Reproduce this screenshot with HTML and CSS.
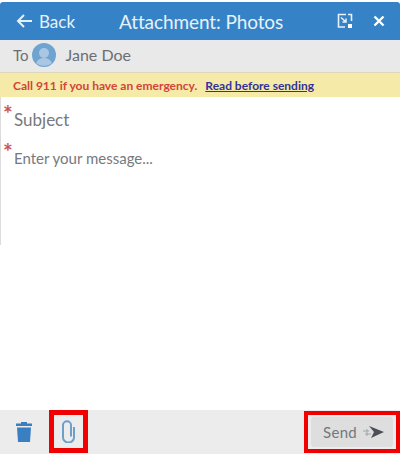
FILE: index.html
```html
<!DOCTYPE html>
<html lang="en">
<head>
    <meta charset="UTF-8">
    <title>Attachment: Photos</title>
    <link rel="stylesheet" href="styles.css">
</head>
<body>
    <div class="panel">
        <header class="title-bar">
            <a class="back">
                <svg width="17" height="16" viewBox="0 0 17 16"><path d="M8 2 2 8l6 6M2 8h14" fill="none" stroke="#e4f0fa" stroke-width="2"/></svg>
                Back
            </a>
            <h1>Attachment: Photos</h1>
            <div class="title-icons">
                <svg width="16" height="16" viewBox="0 0 16 16"><path d="M9 1.500H1.500V14H8M11 1.500h3.500V8" fill="none" stroke="#e8f1f9" stroke-width="1.600"/><path d="M4 4.500 9 9M9 5.500V9H5.500" fill="none" stroke="#e8f1f9" stroke-width="1.500"/><rect x="11" y="11" width="4" height="4" fill="#fff"/></svg>
                <svg width="12" height="12" viewBox="0 0 12 12"><path d="M1.500 1.500l9 9M10.500 1.500l-9 9" stroke="#fff" stroke-width="2.400"/></svg>
            </div>
        </header>
        <div class="to-row">
            <span class="to-label">To</span>
            <svg class="avatar" width="24" height="24" viewBox="0 0 24 24"><circle cx="12" cy="12" r="12" fill="#6fa3d0"/><circle cx="12" cy="10" r="5" fill="#a9c7e2"/><path d="M4 20c2-4 5-5 8-5s6 1 8 5a12 12 0 0 1-16 0z" fill="#a9c7e2"/></svg>
            <span class="to-name">Jane Doe</span>
        </div>
        <div class="notice">
            <span class="notice-text">Call 911 if you have an emergency.</span>
            <a class="notice-link">Read before sending</a>
        </div>
        <form class="message-form">
            <div class="field field-subject"><span class="req">*</span>Subject</div>
            <div class="field field-body"><span class="req">*</span>Enter your message...</div>
        </form>
        <footer class="actions">
            <div class="action-left">
                <svg class="trash" width="18" height="22" viewBox="0 0 18 22"><path d="M6 2.500V1h6v1.500h5V5H1V2.500z" fill="#3a7fc1"/><path d="M2 6.500h14L15 21H3z" fill="#3a7fc1"/></svg>
                <div class="marked clip-box">
                    <svg width="15" height="23" viewBox="0 0 15 23"><path d="M13 7v10.500a5.500 5 0 0 1-11 0V5a4 3.700 0 0 1 8 0v11.500" fill="none" stroke="#6d9fcb" stroke-width="2"/></svg>
                </div>
            </div>
            <div class="marked send-box">
                <button class="send" type="button">
                    Send
                    <svg width="21" height="14" viewBox="0 0 21 14"><path d="M6 1l15 6-13 6 3-6z" fill="#4b4f57"/><path d="M0 6h6M2 9h6M4 4v7" stroke="#a3a6aa" stroke-width="1"/></svg>
                </button>
            </div>
        </footer>
    </div>
</body>
</html>
```

FILE: styles.css
```css
* {
    box-sizing: border-box;
}
body {
    margin: 0;
    font-family: Lato, "Open Sans", sans-serif;
    background-color: white;
}
.panel {
    display: flex;
    flex-direction: column;
    height: 454px;
    padding-top: 2px;
}
.title-bar {
    display: flex;
    align-items: center;
    height: 38px;
    padding: 0 15px 0 16px;
    background-color: #3682c6;
    color: #e6f1fa;
    border-radius: 3px 3px 0 0;
}
.back {
    display: flex;
    align-items: center;
    gap: 6px;
    width: 103px;
    font-size: 17px;
}
.title-bar h1 {
    flex: 1;
    margin: 0;
    font-size: 19px;
    font-weight: 400;
    letter-spacing: -0.1px;
}
.title-icons {
    display: flex;
    align-items: center;
    gap: 20px;
}
.to-row {
    display: flex;
    align-items: center;
    height: 32px;
    padding: 0 0 3px 13px;
    background-color: #e9e9e9;
    color: #6b6f74;
}
.to-label {
    font-size: 15px;
    margin-right: 3px;
}
.to-name {
    margin-left: 10px;
    font-size: 16px;
}
.notice {
    display: flex;
    align-items: center;
    height: 25px;
    padding-left: 13px;
    background-color: #f5eaa8;
    border-top: 1px solid #ddd9b8;
    font-size: 12px;
    font-weight: 700;
}
.notice-text {
    color: #d2443c;
    margin-right: 8px;
}
.notice-link {
    color: #33329a;
    text-decoration: underline;
}
.message-form {
    height: 148px;
    border-left: 1px solid #dcdcdc;
    color: #77797d;
}
.field {
    display: flex;
    padding-left: 2px;
}
.req {
    width: 11px;
    margin-top: -6px;
    color: #c9545a;
    font-size: 23px;
    line-height: 22px;
    font-weight: 700;
}
.field-subject {
    padding-top: 11px;
    font-size: 17px;
    line-height: 24px;
}
.field-body {
    padding-top: 14px;
    font-size: 15px;
    line-height: 24px;
}
.actions {
    display: flex;
    align-items: flex-start;
    justify-content: space-between;
    height: 44px;
    margin-top: auto;
    background-color: #ececec;
}
.action-left {
    display: flex;
    align-items: center;
    height: 43px;
    padding-left: 15px;
}
.trash {
    margin-right: 16px;
}
.marked {
    display: flex;
    align-items: center;
    justify-content: center;
    border: 4px solid #f00000;
}
.clip-box {
    width: 39px;
    height: 43px;
    border-width: 5px;
}
.send-box {
    width: 96px;
    height: 42px;
    margin-top: 1px;
}
.send {
    display: flex;
    align-items: center;
    justify-content: flex-end;
    gap: 6px;
    width: 82px;
    height: 30px;
    padding: 0 9px 0 0;
    border: none;
    border-radius: 3px;
    background-color: #dedede;
    color: #75777b;
    font-family: inherit;
    font-size: 15px;
    letter-spacing: 0.3px;
}
```
